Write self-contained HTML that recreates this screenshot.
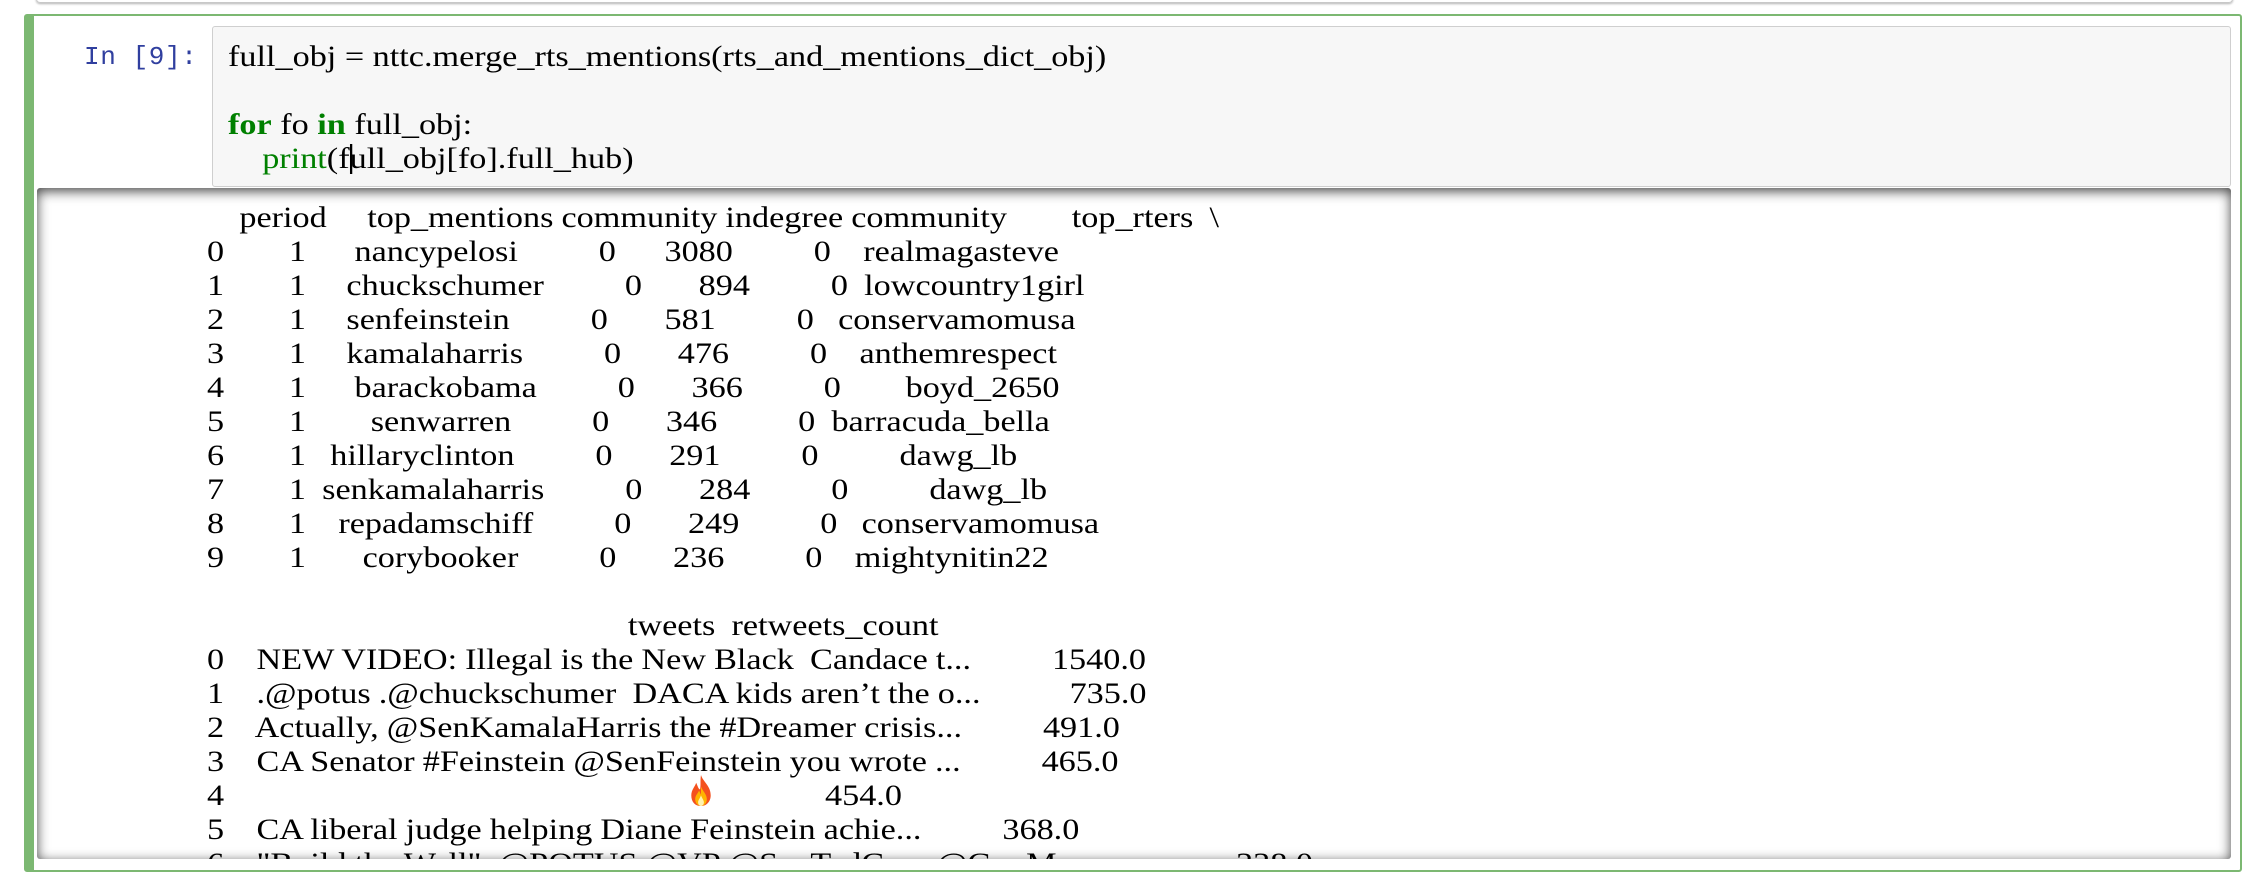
<!DOCTYPE html>
<html><head><meta charset="utf-8">
<style>
html,body{margin:0;padding:0;background:#fff;width:2264px;height:888px;overflow:hidden;position:relative}
.prev{position:absolute;left:36px;top:-8px;width:2195px;height:10px;border:1px solid #c8c8c8;border-top:none;border-radius:0 0 4px 4px;box-shadow:0 1px 2px rgba(0,0,0,.3)}
.cell{position:absolute;left:24px;top:14px;width:2218px;height:858px;border:2px solid #7cb872;border-left:10px solid #7cb872;border-radius:3px;box-sizing:border-box}
.prompt{position:absolute;left:84px;top:40px;font-family:"Liberation Mono",monospace;font-size:26px;line-height:34px;color:#303f9f;letter-spacing:0.6px}
.inp{position:absolute;left:212px;top:26px;width:2019px;height:161px;background:#f7f7f7;border:1.5px solid #cfcfcf;border-radius:3px;box-sizing:border-box}
.out{position:absolute;left:37px;top:188px;width:2194px;height:671px;background:#fff;border-radius:3px;box-shadow:inset 0 3px 12px rgba(0,0,0,.75);overflow:hidden}
.txt{font-family:"Liberation Serif",serif;font-size:30px;line-height:34px;color:#000;white-space:pre;transform:scaleX(1.14);transform-origin:0 0;position:absolute;margin:0}
.tbl{word-spacing:-0.4px}
.kw{color:#008000;font-weight:bold}
.bi{color:#008000}
.cur{display:inline-block;width:0;border-left:2px solid #000;height:30px;vertical-align:-6px;margin-right:-2px}
</style></head><body>
<div class="prev"></div>
<div class="cell"></div>
<div class="prompt">In [9]:</div>
<div class="inp"></div>
<pre class="txt" style="left:228px;top:40px">full_obj = nttc.merge_rts_mentions(rts_and_mentions_dict_obj)

<span class="kw">for</span> fo <span class="kw">in</span> full_obj:
    <span class="bi">print</span>(f<span class="cur"></span>ull_obj[fo].full_hub)</pre>
<div class="out">
<pre class="txt tbl" style="left:170px;top:13px">    period     top_mentions community indegree community        top_rters  \
0        1      nancypelosi          0      3080          0    realmagasteve   
1        1     chuckschumer          0       894          0  lowcountry1girl   
2        1     senfeinstein          0       581          0   conservamomusa   
3        1     kamalaharris          0       476          0    anthemrespect   
4        1      barackobama          0       366          0        boyd_2650   
5        1        senwarren          0       346          0  barracuda_bella   
6        1   hillaryclinton          0       291          0          dawg_lb   
7        1  senkamalaharris          0       284          0          dawg_lb   
8        1    repadamschiff          0       249          0   conservamomusa   
9        1       corybooker          0       236          0    mightynitin22   

                                                    tweets  retweets_count
0    NEW VIDEO: Illegal is the New Black  Candace t...          1540.0
1    .@potus .@chuckschumer  DACA kids aren’t the o...           735.0
2    Actually, @SenKamalaHarris the #Dreamer crisis...          491.0
3    CA Senator #Feinstein @SenFeinstein you wrote ...          465.0
4
5    CA liberal judge helping Diane Feinstein achie...          368.0
6    "Build the Wall"  @POTUS @VP @SenTedCruz @GovM...                   338.0</pre>
<span style="position:absolute;left:788px;top:591px;font-family:'Liberation Serif',serif;font-size:30px;line-height:34px;transform:scaleX(1.14);transform-origin:0 0">454.0</span>
<svg style="position:absolute;left:652px;top:586px" width="24" height="33" viewBox="0 0 24 34">
<path d="M12 1 C14 8 22 12 22 22 C22 29 17 33 12 33 C6 33 2 29 2 22 C2 16 6 13 7 9 C9 13 9 15 11 16 C12 11 11 6 12 1Z" fill="#f4511e"/>
<path d="M12 13 C14 18 18 21 18 26 C18 30 15 33 12 33 C9 33 6 30 6 26 C6 22 9 20 10 17 C11 19 11 20 12 21Z" fill="#ffb300"/>
<path d="M12 22 C13 25 15 27 15 29 C15 31 14 33 12 33 C10 33 9 31 9 29 C9 27 11 25 12 22Z" fill="#fff3b0"/>
</svg>
</div>
</body></html>
